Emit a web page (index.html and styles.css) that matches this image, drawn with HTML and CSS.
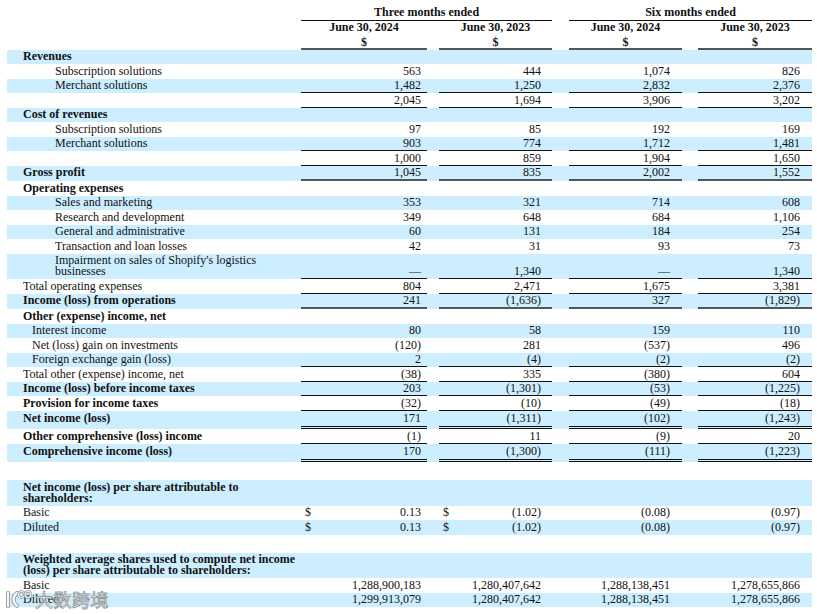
FILE: index.html
```html
<!DOCTYPE html>
<html lang="en">
<head>
<meta charset="utf-8">
<title>Condensed Consolidated Statements of Operations</title>
<link rel="stylesheet" href="styles.css">
</head>
<body>
<table class="fs">
  <colgroup>
    <col class="w-lbl"><col class="w-a"><col class="w-g1"><col class="w-b"><col class="w-g2"><col class="w-c"><col class="w-g3"><col class="w-d">
  </colgroup>
  <thead>
    <tr class="h1">
      <td></td>
      <td class="h top" colspan="3">Three months ended</td>
      <td class="g"></td>
      <td class="h top" colspan="3">Six months ended</td>
    </tr>
    <tr>
      <td></td>
      <td class="h">June 30, 2024</td><td class="g"></td>
      <td class="h">June 30, 2023</td><td class="g"></td>
      <td class="h">June 30, 2024</td><td class="g"></td>
      <td class="h">June 30, 2023</td>
    </tr>
    <tr class="u2 hd">
      <td></td>
      <td class="h n">$</td><td class="g"></td>
      <td class="h n">$</td><td class="g"></td>
      <td class="h n">$</td><td class="g"></td>
      <td class="h n">$</td>
    </tr>
  </thead>
  <tbody>
    <tr class="hl"><td class="lbl l0 b">Revenues</td><td class="n"></td><td class="g"></td><td class="n"></td><td class="g"></td><td class="n"></td><td class="g"></td><td class="n"></td></tr>
    <tr><td class="lbl l2">Subscription solutions</td><td class="n">563</td><td class="g"></td><td class="n">444</td><td class="g"></td><td class="n">1,074</td><td class="g"></td><td class="n">826</td></tr>
    <tr class="hl u1"><td class="lbl l2">Merchant solutions</td><td class="n">1,482</td><td class="g"></td><td class="n">1,250</td><td class="g"></td><td class="n">2,832</td><td class="g"></td><td class="n">2,376</td></tr>
    <tr class="u1"><td class="lbl"></td><td class="n">2,045</td><td class="g"></td><td class="n">1,694</td><td class="g"></td><td class="n">3,906</td><td class="g"></td><td class="n">3,202</td></tr>
    <tr class="hl"><td class="lbl l0 b">Cost of revenues</td><td class="n"></td><td class="g"></td><td class="n"></td><td class="g"></td><td class="n"></td><td class="g"></td><td class="n"></td></tr>
    <tr><td class="lbl l2">Subscription solutions</td><td class="n">97</td><td class="g"></td><td class="n">85</td><td class="g"></td><td class="n">192</td><td class="g"></td><td class="n">169</td></tr>
    <tr class="hl u1"><td class="lbl l2">Merchant solutions</td><td class="n">903</td><td class="g"></td><td class="n">774</td><td class="g"></td><td class="n">1,712</td><td class="g"></td><td class="n">1,481</td></tr>
    <tr class="u1"><td class="lbl"></td><td class="n">1,000</td><td class="g"></td><td class="n">859</td><td class="g"></td><td class="n">1,904</td><td class="g"></td><td class="n">1,650</td></tr>
    <tr class="hl u2 hx"><td class="lbl l0 b">Gross profit</td><td class="n">1,045</td><td class="g"></td><td class="n">835</td><td class="g"></td><td class="n">2,002</td><td class="g"></td><td class="n">1,552</td></tr>
    <tr><td class="lbl l0 b">Operating expenses</td><td class="n"></td><td class="g"></td><td class="n"></td><td class="g"></td><td class="n"></td><td class="g"></td><td class="n"></td></tr>
    <tr class="hl"><td class="lbl l2">Sales and marketing</td><td class="n">353</td><td class="g"></td><td class="n">321</td><td class="g"></td><td class="n">714</td><td class="g"></td><td class="n">608</td></tr>
    <tr><td class="lbl l2">Research and development</td><td class="n">349</td><td class="g"></td><td class="n">648</td><td class="g"></td><td class="n">684</td><td class="g"></td><td class="n">1,106</td></tr>
    <tr class="hl"><td class="lbl l2">General and administrative</td><td class="n">60</td><td class="g"></td><td class="n">131</td><td class="g"></td><td class="n">184</td><td class="g"></td><td class="n">254</td></tr>
    <tr><td class="lbl l2">Transaction and loan losses</td><td class="n">42</td><td class="g"></td><td class="n">31</td><td class="g"></td><td class="n">93</td><td class="g"></td><td class="n">73</td></tr>
    <tr class="hl u1"><td class="lbl l2">Impairment on sales of Shopify's logistics<br>businesses</td><td class="n">—</td><td class="g"></td><td class="n">1,340</td><td class="g"></td><td class="n">—</td><td class="g"></td><td class="n">1,340</td></tr>
    <tr class="u1"><td class="lbl l0">Total operating expenses</td><td class="n">804</td><td class="g"></td><td class="n">2,471</td><td class="g"></td><td class="n">1,675</td><td class="g"></td><td class="n">3,381</td></tr>
    <tr class="hl u2 hx"><td class="lbl l0 b">Income (loss) from operations</td><td class="n">241</td><td class="g"></td><td class="n">(1,636)</td><td class="g"></td><td class="n">327</td><td class="g"></td><td class="n">(1,829)</td></tr>
    <tr><td class="lbl l0 b">Other (expense) income, net</td><td class="n"></td><td class="g"></td><td class="n"></td><td class="g"></td><td class="n"></td><td class="g"></td><td class="n"></td></tr>
    <tr class="hl"><td class="lbl l1">Interest income</td><td class="n">80</td><td class="g"></td><td class="n">58</td><td class="g"></td><td class="n">159</td><td class="g"></td><td class="n">110</td></tr>
    <tr><td class="lbl l1">Net (loss) gain on investments</td><td class="n">(120)</td><td class="g"></td><td class="n">281</td><td class="g"></td><td class="n">(537)</td><td class="g"></td><td class="n">496</td></tr>
    <tr class="hl u1"><td class="lbl l1">Foreign exchange gain (loss)</td><td class="n">2</td><td class="g"></td><td class="n">(4)</td><td class="g"></td><td class="n">(2)</td><td class="g"></td><td class="n">(2)</td></tr>
    <tr class="u1"><td class="lbl l0">Total other (expense) income, net</td><td class="n">(38)</td><td class="g"></td><td class="n">335</td><td class="g"></td><td class="n">(380)</td><td class="g"></td><td class="n">604</td></tr>
    <tr class="hl u1"><td class="lbl l0 b">Income (loss) before income taxes</td><td class="n">203</td><td class="g"></td><td class="n">(1,301)</td><td class="g"></td><td class="n">(53)</td><td class="g"></td><td class="n">(1,225)</td></tr>
    <tr class="u1"><td class="lbl l0 b">Provision for income taxes</td><td class="n">(32)</td><td class="g"></td><td class="n">(10)</td><td class="g"></td><td class="n">(49)</td><td class="g"></td><td class="n">(18)</td></tr>
    <tr class="hl ud"><td class="lbl l0 b">Net income (loss)</td><td class="n">171</td><td class="g"></td><td class="n">(1,311)</td><td class="g"></td><td class="n">(102)</td><td class="g"></td><td class="n">(1,243)</td></tr>
    <tr class="u1"><td class="lbl l0 b">Other comprehensive (loss) income</td><td class="n">(1)</td><td class="g"></td><td class="n">11</td><td class="g"></td><td class="n">(9)</td><td class="g"></td><td class="n">20</td></tr>
    <tr class="hl ud"><td class="lbl l0 b">Comprehensive income (loss)</td><td class="n">170</td><td class="g"></td><td class="n">(1,300)</td><td class="g"></td><td class="n">(111)</td><td class="g"></td><td class="n">(1,223)</td></tr>
    <tr class="sp"><td colspan="8"></td></tr>
    <tr class="hl"><td class="lbl l0 b">Net income (loss) per share attributable to<br>shareholders:</td><td class="n"></td><td class="g"></td><td class="n"></td><td class="g"></td><td class="n"></td><td class="g"></td><td class="n"></td></tr>
    <tr><td class="lbl l0">Basic</td><td class="n"><span class="cur">$</span>0.13</td><td class="g"></td><td class="n"><span class="cur">$</span>(1.02)</td><td class="g"></td><td class="n">(0.08)</td><td class="g"></td><td class="n">(0.97)</td></tr>
    <tr class="hl"><td class="lbl l0">Diluted</td><td class="n"><span class="cur">$</span>0.13</td><td class="g"></td><td class="n"><span class="cur">$</span>(1.02)</td><td class="g"></td><td class="n">(0.08)</td><td class="g"></td><td class="n">(0.97)</td></tr>
    <tr class="sp"><td colspan="8"></td></tr>
    <tr class="hl"><td class="lbl l0 b">Weighted average shares used to compute net income<br>(loss) per share attributable to shareholders:</td><td class="n"></td><td class="g"></td><td class="n"></td><td class="g"></td><td class="n"></td><td class="g"></td><td class="n"></td></tr>
    <tr><td class="lbl l0">Basic</td><td class="n">1,288,900,183</td><td class="g"></td><td class="n">1,280,407,642</td><td class="g"></td><td class="n">1,288,138,451</td><td class="g"></td><td class="n">1,278,655,866</td></tr>
    <tr class="hl"><td class="lbl l0">Diluted</td><td class="n">1,299,913,079</td><td class="g"></td><td class="n">1,280,407,642</td><td class="g"></td><td class="n">1,288,138,451</td><td class="g"></td><td class="n">1,278,655,866</td></tr>
  </tbody>
</table>
<div class="wm" aria-hidden="true">
  <svg class="wm-logo" width="28" height="20" viewBox="0 0 28 20">
    <g fill="none" stroke="#8c8c8c" stroke-width="4" stroke-linecap="round">
      <path d="M4 4 V17"/>
      <path d="M13 4 Q6 10.5 13 17"/>
    </g>
    <g fill="none" stroke="#f6f6f6" stroke-width="2.4" stroke-linecap="round">
      <path d="M4 4 V17"/>
      <path d="M13 4 Q6 10.5 13 17"/>
    </g>
    <circle cx="17.5" cy="5.5" r="3" fill="none" stroke="#8c8c8c" stroke-width="2.6"/>
    <circle cx="17.5" cy="5.5" r="3" fill="none" stroke="#f6f6f6" stroke-width="1.2"/>
    <circle cx="24" cy="5.5" r="3" fill="none" stroke="#8c8c8c" stroke-width="2.6"/>
    <circle cx="24" cy="5.5" r="3" fill="none" stroke="#f6f6f6" stroke-width="1.2"/>
  </svg>
  <span class="wm-text">大数跨境</span>
</div>
</body>
</html>
```
FILE: styles.css
```css
html, body {
  margin: 0;
  padding: 0;
  background: #ffffff;
}

body {
  font-family: "Liberation Serif", "Times New Roman", serif;
  font-size: 12px;
  color: #111;
  position: relative;
  min-height: 614px;
}

.fs {
  border-collapse: collapse;
  table-layout: fixed;
  width: 805px;
  margin: 5px 0 0 7px;
}

.w-lbl { width: 294px; }
.w-a { width: 126px; }
.w-g1 { width: 12px; }
.w-b { width: 113px; }
.w-g2 { width: 17px; }
.w-c { width: 113px; }
.w-g3 { width: 16px; }
.w-d { width: 114px; }

.fs td {
  padding: 1.5px 0 2px;
  line-height: 11px;
  vertical-align: bottom;
  white-space: nowrap;
}

.fs tr.hl { background: #cceeff; }

.lbl { text-align: left; }
.l0 { padding-left: 16px !important; }
.l1 { padding-left: 25px !important; }
.l2 { padding-left: 48px !important; }
.b { font-weight: bold; }

.n { text-align: right; }
.fs td.n:nth-child(2) { padding-right: 6px; }
.fs td.n:nth-child(4) { padding-right: 11px; }
.fs td.n:nth-child(6) { padding-right: 12px; }
.fs td.n:nth-child(8) { padding-right: 12px; }

.h {
  text-align: center !important;
  font-weight: bold;
  padding-right: 0 !important;
}

.fs tr.h1 td { padding-bottom: 3px; }

.top {
  background: linear-gradient(#111, #111) left bottom / 100% 1px no-repeat;
}

.fs tr.u1 td.n {
  background: linear-gradient(#111, #111) left bottom / 100% 1px no-repeat;
}

.fs tr.u2 td.n {
  background: linear-gradient(#555, #555) left bottom / 100% 2px no-repeat;
}

.fs tr.hx td { padding-bottom: 3px; }
.fs tr.hd td { padding-bottom: 2px; }

.fs tr.ud td { padding-top: 2.5px; padding-bottom: 5px; }
.fs tr.ud td.n {
  background:
    linear-gradient(#111, #111) left bottom / 100% 1px no-repeat,
    linear-gradient(#111, #111) left calc(100% - 2px) / 100% 1px no-repeat;
}

.fs tr.sp td {
  height: 18px;
  padding: 0;
}

.cur {
  float: left;
  padding-left: 4px;
}

.wm {
  position: absolute;
  left: 4px;
  top: 589px;
  display: flex;
  align-items: center;
  gap: 3px;
  pointer-events: none;
}

.wm-text {
  font-family: "Noto Sans CJK SC", "Noto Sans", sans-serif;
  font-size: 18px;
  line-height: 20px;
  color: rgba(250, 250, 250, 0.92);
  -webkit-text-stroke: 0.7px #8c8c8c;
  letter-spacing: 0.5px;
}
```
